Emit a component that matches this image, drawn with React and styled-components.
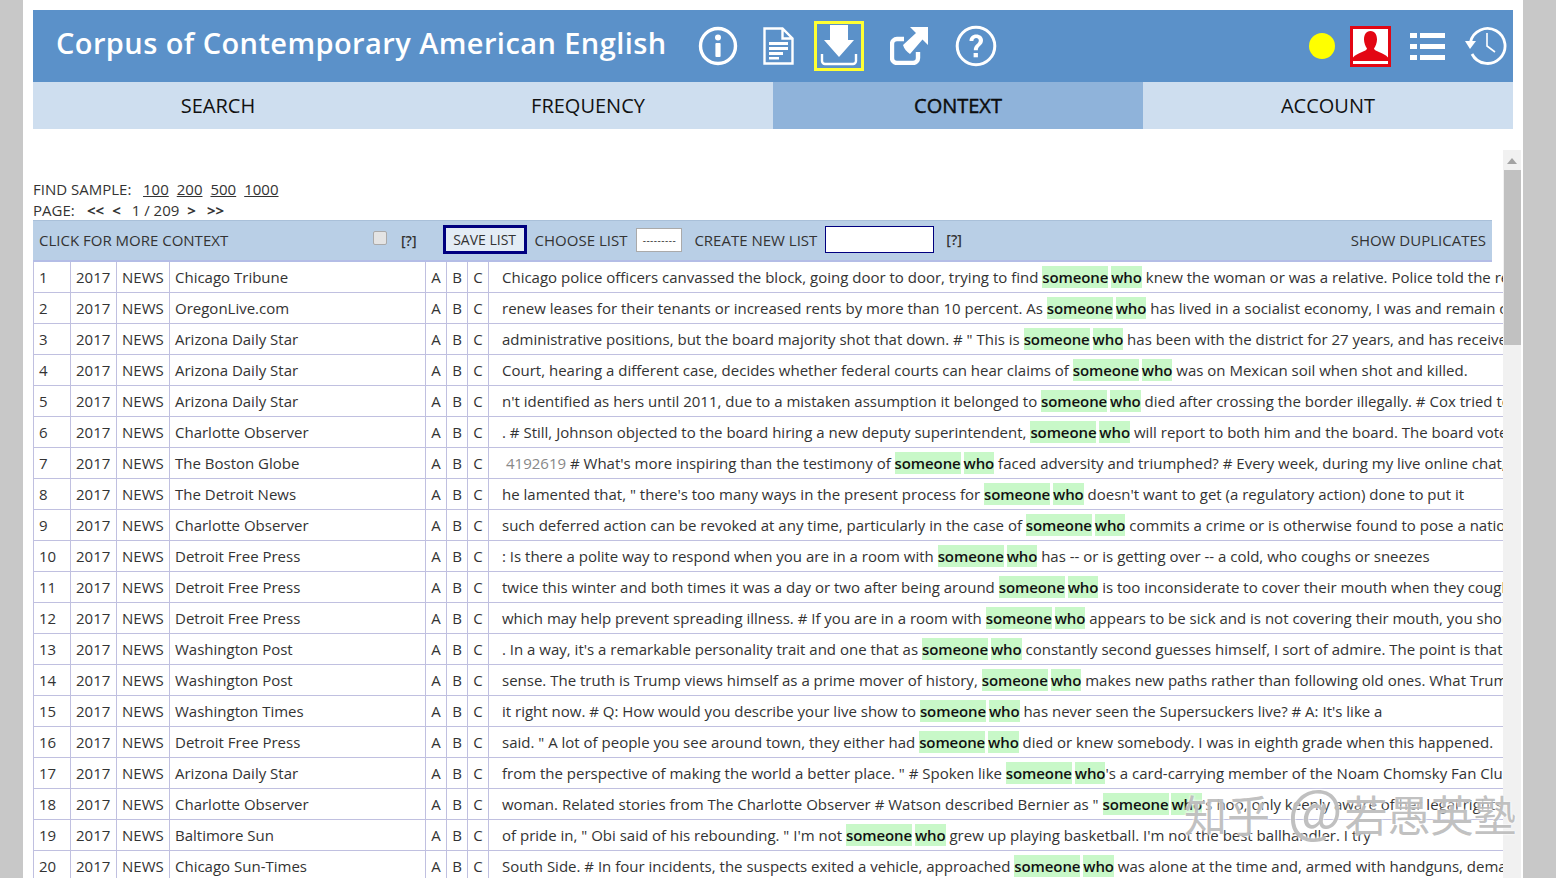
import React from 'react';
import styled, { createGlobalStyle } from 'styled-components';

const Global = createGlobalStyle`
  html, body {
    margin: 0;
    padding: 0;
    height: 100%;
    overflow: hidden;
    background: #c8c8c8;
  }
  body {
    font-family: "Open Sans", "Noto Sans", sans-serif;
    color: #222;
  }
`;

const Page = styled.div`
  position: relative;
  box-sizing: border-box;
  width: 1500px;
  height: 878px;
  margin-left: 23px;
  padding: 10px 10px 0;
  background: #fff;
  overflow: hidden;
`;

const Header = styled.header`
  display: flex;
  align-items: center;
  height: 72px;
  width: 1480px;
  background: #5b91c9;
  box-sizing: border-box;
  padding: 0 6px 0 23px;
`;

const Title = styled.h1`
  margin: 0 0 8px;
  width: 642px;
  flex: none;
  font-size: 29px;
  font-weight: 600;
  letter-spacing: 0.42px;
  color: #fff;
  white-space: nowrap;
`;

const IconRow = styled.div`
  display: flex;
  align-items: center;
  margin-left: ${p => p.$end ? 'auto' : '0'};
`;

const IconSlot = styled.div`
  display: flex;
  margin-left: ${p => p.$left || 0}px;
`;

const IconFrame = styled.div`
  display: flex;
  align-items: center;
  justify-content: center;
  box-sizing: border-box;
  width: ${p => p.$w}px;
  height: ${p => p.$h}px;
  border: 3px solid ${p => p.$border};
  background: ${p => p.$bg || 'transparent'};
`;

const Dot = styled.div`
  width: 26px;
  height: 26px;
  border-radius: 50%;
  background: #ffff00;
`;

const Tabs = styled.nav`
  display: grid;
  grid-template-columns: repeat(4, 370px);
  height: 47px;
  background: #cedeef;
`;

const Tab = styled.div`
  display: flex;
  align-items: center;
  justify-content: center;
  font-size: 20px;
  color: #111;
  background: ${p => p.$active ? '#8fb3da' : 'transparent'};
  -webkit-text-stroke: ${p => p.$active ? '0.4px #000' : '0'};
`;

const Controls = styled.div`
  margin-top: 50px;
  font-size: 15px;
  line-height: 20px;
  color: #333;
`;

const ControlLine = styled.div`
  display: flex;
  height: ${p => p.$h}px;
  white-space: nowrap;
`;

const Label = styled.span`
  width: ${p => p.$w}px;
  flex: none;
`;

const SampleLink = styled.a`
  color: #333;
  text-decoration: underline;
  margin-right: 8px;
`;

const Pager = styled.span`
  font-weight: ${p => p.$bold ? 700 : 400};
  margin-right: ${p => p.$gap}px;
`;

const Toolbar = styled.div`
  display: flex;
  align-items: center;
  box-sizing: border-box;
  width: 1459px;
  height: 42px;
  padding: 0 6px 2px;
  background: #b9cfe6;
  border-top: 1px solid #a9c0d9;
  border-bottom: 2px solid #b4bde6;
  font-size: 15px;
  color: #333;
  white-space: nowrap;
`;

const MoreContext = styled.span`
  width: 334px;
  flex: none;
`;

const Check = styled.span`
  width: 12px;
  height: 12px;
  flex: none;
  border: 1px solid #aaa;
  border-radius: 2px;
  background: #e4e4e4;
  margin-bottom: 3px;
`;

const HelpMark = styled.span`
  font-weight: 600;
  font-size: 14px;
  margin-left: ${p => p.$left}px;
  margin-top: ${p => p.$top || 0}px;
`;

const SaveButton = styled.div`
  display: flex;
  align-items: center;
  justify-content: center;
  box-sizing: border-box;
  width: 84px;
  height: 29px;
  margin: 0 8px 0 26px;
  border: 3px solid #00007f;
  background: #e3ecf5;
  font-size: 14px;
`;

const ChooseSelect = styled.div`
  display: flex;
  align-items: center;
  justify-content: center;
  box-sizing: border-box;
  width: 46px;
  height: 24px;
  margin: 0 12px 0 9px;
  border: 1px solid #aaa;
  background: #fff;
  font-size: 10px;
  letter-spacing: 0.5px;
`;

const NewListInput = styled.div`
  box-sizing: border-box;
  width: 109px;
  height: 27px;
  margin-left: 8px;
  border: 1px solid #00007f;
  background: #fff;
`;

const Duplicates = styled.span`
  margin-left: auto;
`;

const Results = styled.div`
  width: 1470px;
  overflow: hidden;
`;

const Row = styled.div`
  display: grid;
  grid-template-columns: 37px 46px 53px 256px 21px 21px 21px 1015px;
  width: 1470px;
  height: 31px;
  box-sizing: border-box;
  border-bottom: 1px solid #c0c0e0;
  font-size: 15px;
  color: #333;
`;

const Cell = styled.div`
  display: flex;
  align-items: center;
  justify-content: ${p => p.$center ? 'center' : 'flex-start'};
  box-sizing: border-box;
  padding: 0 0 1px ${p => p.$center ? 0 : 5}px;
  border-left: 1px solid #c0c0e0;
  white-space: nowrap;
  overflow: hidden;
`;

const Concordance = styled(Cell)`
  display: block;
  padding: 0 0 0 13px;
  line-height: 30px;
`;

const TextId = styled.span`
  color: #888;
  margin: 0 0 0 4px;
`;

const Hit = styled.span`
  font-weight: 600;
  letter-spacing: -0.1px;
  color: #111;
  background: #c8f8c8;
  margin-left: ${p => p.$left || 0}px;
  display: inline-block;
  line-height: 22px;
`;

const Scrollbar = styled.div`
  position: absolute;
  left: 1480px;
  top: 150px;
  bottom: 0;
  width: 18px;
  background: #f1f1f1;
  display: flex;
  flex-direction: column;
  align-items: center;
`;

const ScrollArrow = styled.div`
  width: 0;
  height: 0;
  margin: 8px 0 6px;
  border-left: 5px solid transparent;
  border-right: 5px solid transparent;
  border-bottom: 6px solid #a3a3a3;
`;

const ScrollThumb = styled.div`
  width: 17px;
  height: 175px;
  background: #c1c1c1;
`;

const Watermark = styled.div`
  position: absolute;
  left: 1161px;
  top: 785px;
  font-family: "Noto Sans CJK SC", "Noto Sans", sans-serif;
  font-size: 43px;
  line-height: 56px;
  color: rgba(165, 165, 165, 0.7);
  text-shadow: 0 0 2px rgba(255, 255, 255, 0.9), 0 0 3px rgba(255, 255, 255, 0.8);
  white-space: nowrap;
`;

const WatermarkAt = styled.span`
  font-size: 58px;
  line-height: 0;
  margin: 0 2px 0 8px;
`;

const InfoIcon = () => (
  <svg width="40" height="40" viewBox="0 0 40 40">
    <circle cx="20" cy="20" r="17.5" fill="none" stroke="#fff" strokeWidth="3.4" />
    <circle cx="20" cy="11.5" r="3" fill="#fff" />
    <rect x="17.4" y="17" width="5.2" height="14" rx="1" fill="#fff" />
  </svg>
);

const DocIcon = () => (
  <svg width="31" height="38" viewBox="0 0 31 38">
    <path d="M1.500 1.500h18l10 10v25h-28z M19.500 1.500v10h10" fill="none" stroke="#fff" strokeWidth="2.400" />
    <path d="M6 15h19v3H6zM6 20h19v3H6zM6 25h14v3H6zM6 30h10v2.500H6z" fill="#fff" />
  </svg>
);

const DownloadIcon = () => (
  <svg width="42" height="44" viewBox="0 0 42 44">
    <path d="M12 1h18v15h6L21 33 6 16h6z" fill="#fff" />
    <path d="M4 30v7a3 3 0 0 0 3 3h28a3 3 0 0 0 3-3v-7" fill="none" stroke="#fff" strokeWidth="2.400" />
  </svg>
);

const ShareIcon = () => (
  <svg width="38" height="38" viewBox="0 0 38 38">
    <path d="M14 12H7a5 5 0 0 0-5 5v14a5 5 0 0 0 5 5h16a5 5 0 0 0 5-5v-6" fill="none" stroke="#fff" strokeWidth="4.400" />
    <path d="M20 0h18v18l-5.500-5.500L20 27c-3-2-6-5-7-9L26 6z" fill="#fff" />
  </svg>
);

const HelpIcon = () => (
  <svg width="42" height="42" viewBox="0 0 42 42">
    <circle cx="21" cy="21" r="18.800" fill="none" stroke="#fff" strokeWidth="3" />
    <path d="M14.500 16c0-4 3-6.500 6.800-6.500s6.700 2.300 6.700 5.800c0 5.500-5.200 5.200-5.200 10h-4c0-6 5-6 5-9.800 0-1.500-1-2.600-2.600-2.600-1.800 0-2.800 1.300-2.800 3.100z" fill="#fff" />
    <rect x="18.600" y="28" width="4.300" height="4.300" fill="#fff" />
  </svg>
);

const PersonIcon = () => (
  <svg width="35" height="35" viewBox="0 0 35 35">
    <path d="M17.500 2c4.500 0 6.500 4 6.500 8.500 0 3.500-1.500 7-3 9 0 3 10 4 14 9V32H0v-3.500c4-5 14-6 14-9-1.500-2-3-5.500-3-9C11 6 13 2 17.500 2z" fill="#e30613" />
  </svg>
);

const ListIcon = () => (
  <svg width="35" height="27" viewBox="0 0 35 27">
    <path d="M0 0h7v5H0zM10 0h25v5H10zM0 11h7v5H0zM10 11h25v5H10zM0 22h7v5H0zM10 22h25v5H10z" fill="#fff" />
  </svg>
);

const HistoryIcon = () => (
  <svg width="42" height="40" viewBox="0 0 42 40">
    <path d="M5.500 16A17.500 17.500 0 1 1 7 28" fill="none" stroke="#fff" strokeWidth="2.800" />
    <path d="M0 15h11l-6 8z" fill="#fff" />
    <path d="M22 7v13l8 6" fill="none" stroke="#fff" strokeWidth="1.600" />
  </svg>
);

const rows = [
  ['Chicago Tribune', 'Chicago police officers canvassed the block, going door to door, trying to find', "knew the woman or was a relative. Police told the reporter that he had"],
  ['OregonLive.com', 'renew leases for their tenants or increased rents by more than 10 percent. As', 'has lived in a socialist economy, I was and remain convinced that it'],
  ['Arizona Daily Star', 'administrative positions, but the board majority shot that down. # " This is', 'has been with the district for 27 years, and has received many honors'],
  ['Arizona Daily Star', 'Court, hearing a different case, decides whether federal courts can hear claims of', 'was on Mexican soil when shot and killed.'],
  ['Arizona Daily Star', "n't identified as hers until 2011, due to a mistaken assumption it belonged to", 'died after crossing the border illegally. # Cox tried to find the family'],
  ['Charlotte Observer', '. # Still, Johnson objected to the board hiring a new deputy superintendent,', 'will report to both him and the board. The board voted to approve it'],
  ['The Boston Globe', "# What's more inspiring than the testimony of", 'faced adversity and triumphed? # Every week, during my live online chat, people ask', '4192619'],
  ['The Detroit News', 'he lamented that, " there\'s too many ways in the present process for', "doesn't want to get (a regulatory action) done to put it"],
  ['Charlotte Observer', 'such deferred action can be revoked at any time, particularly in the case of', 'commits a crime or is otherwise found to pose a national security risk'],
  ['Detroit Free Press', ': Is there a polite way to respond when you are in a room with', 'has -- or is getting over -- a cold, who coughs or sneezes'],
  ['Detroit Free Press', 'twice this winter and both times it was a day or two after being around', 'is too inconsiderate to cover their mouth when they cough or sneeze'],
  ['Detroit Free Press', 'which may help prevent spreading illness. # If you are in a room with', 'appears to be sick and is not covering their mouth, you should move away'],
  ['Washington Post', ". In a way, it's a remarkable personality trait and one that as", 'constantly second guesses himself, I sort of admire. The point is that he'],
  ['Washington Post', 'sense. The truth is Trump views himself as a prime mover of history,', 'makes new paths rather than following old ones. What Trump does not see'],
  ['Washington Times', 'it right now. # Q: How would you describe your live show to', 'has never seen the Supersuckers live? # A: It\'s like a'],
  ['Detroit Free Press', 'said. " A lot of people you see around town, they either had', 'died or knew somebody. I was in eighth grade when this happened.'],
  ['Arizona Daily Star', 'from the perspective of making the world a better place. " # Spoken like', "'s a card-carrying member of the Noam Chomsky Fan Club and"],
  ['Charlotte Observer', 'woman. Related stories from The Charlotte Observer # Watson described Bernier as "', "'s hoo, only keenly aware of her legal rights"],
  ['Baltimore Sun', 'of pride in, " Obi said of his rebounding. " I\'m not', "grew up playing basketball. I'm not the best ballhandler. I try"],
  ['Chicago Sun-Times', 'South Side. # In four incidents, the suspects exited a vehicle, approached', 'was alone at the time and, armed with handguns, demanded'],
];

const App = () => (
  <>
    <Global />
    <Page>
      <Header>
        <Title>Corpus of Contemporary American English</Title>
        <IconRow>
          <IconSlot><InfoIcon /></IconSlot>
          <IconSlot $left={25}><DocIcon /></IconSlot>
          <IconSlot $left={20}>
            <IconFrame $w={50} $h={50} $border="#ffff33"><DownloadIcon /></IconFrame>
          </IconSlot>
          <IconSlot $left={26}><ShareIcon /></IconSlot>
          <IconSlot $left={27}><HelpIcon /></IconSlot>
        </IconRow>
        <IconRow $end>
          <Dot />
          <IconSlot $left={15}>
            <IconFrame $w={41} $h={41} $border="#e30613" $bg="#fff"><PersonIcon /></IconFrame>
          </IconSlot>
          <IconSlot $left={19}><ListIcon /></IconSlot>
          <IconSlot $left={20}><HistoryIcon /></IconSlot>
        </IconRow>
      </Header>
      <Tabs>
        <Tab>SEARCH</Tab>
        <Tab>FREQUENCY</Tab>
        <Tab $active>CONTEXT</Tab>
        <Tab>ACCOUNT</Tab>
      </Tabs>
      <Controls>
        <ControlLine $h={21}>
          <Label $w={110}>FIND SAMPLE:</Label>
          <SampleLink>100</SampleLink>
          <SampleLink>200</SampleLink>
          <SampleLink>500</SampleLink>
          <SampleLink>1000</SampleLink>
        </ControlLine>
        <ControlLine $h={20}>
          <Label $w={54}>PAGE:</Label>
          <Pager $bold $gap={8}>&lt;&lt;</Pager>
          <Pager $bold $gap={11}>&lt;</Pager>
          <Pager $gap={8}>1 / 209</Pager>
          <Pager $bold $gap={11}>&gt;</Pager>
          <Pager $bold $gap={0}>&gt;&gt;</Pager>
        </ControlLine>
      </Controls>
      <Toolbar>
        <MoreContext>CLICK FOR MORE CONTEXT</MoreContext>
        <Check />
        <HelpMark $left={14} $top={2}>[?]</HelpMark>
        <SaveButton>SAVE LIST</SaveButton>
        CHOOSE LIST
        <ChooseSelect>---------</ChooseSelect>
        CREATE NEW LIST
        <NewListInput />
        <HelpMark $left={12}>[?]</HelpMark>
        <Duplicates>SHOW DUPLICATES</Duplicates>
      </Toolbar>
      <Results>
        {rows.map(([source, before, after, id], i) => (
          <Row key={i}>
            <Cell>{i + 1}</Cell>
            <Cell>2017</Cell>
            <Cell>NEWS</Cell>
            <Cell>{source}</Cell>
            <Cell $center>A</Cell>
            <Cell $center>B</Cell>
            <Cell $center>C</Cell>
            <Concordance>
              {id && <TextId>{id} </TextId>}
              {before} <Hit>someone</Hit> <Hit $left={-1}>who</Hit>{after.startsWith("'") ? '' : ' '}{after}
            </Concordance>
          </Row>
        ))}
      </Results>
      <Scrollbar>
        <ScrollArrow />
        <ScrollThumb />
      </Scrollbar>
      <Watermark>知乎 <WatermarkAt>@</WatermarkAt>若愚英塾</Watermark>
    </Page>
  </>
);

export default App;
